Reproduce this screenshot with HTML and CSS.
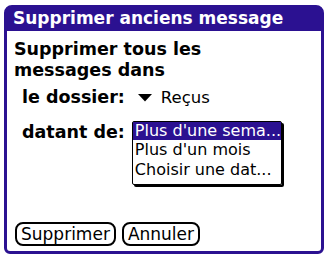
FILE: index.html
```html
<!DOCTYPE html>
<html>
<head>
<meta charset="utf-8">
<link rel="stylesheet" href="styles.css">
</head>
<body>
<div class="dialog">
  <div class="title">Supprimer anciens message</div>
  <div class="content">
    <div class="intro">Supprimer tous les<br>messages dans</div>
    <div class="row folder">
      <span class="label">le dossier:</span>
      <span class="trigger"><svg class="arrow" width="14" height="8" viewBox="0 0 14 8"><path d="M0 0H14L7 7.5Z" fill="#000"/></svg>Reçus</span>
    </div>
    <div class="row dating">
      <span class="label">datant de:</span>
      <ul class="list">
        <li class="sel">Plus d'une sema...</li>
        <li>Plus d'un mois</li>
        <li>Choisir une dat...</li>
      </ul>
    </div>
    <div class="buttons">
      <button class="btn">Supprimer</button>
      <button class="btn">Annuler</button>
    </div>
  </div>
</div>
</body>
</html>
```
FILE: styles.css
```css
html, body {
  margin: 0;
  padding: 0;
  background: #fff;
}
body {
  width: 328px;
  height: 257px;
  overflow: hidden;
  font-family: "DejaVu Sans", sans-serif;
}
.dialog {
  margin: 5px 0 0 4px;
  width: 320px;
  height: 249px;
  box-sizing: border-box;
  border: 3px solid #2b1191;
  border-radius: 8px 8px 6px 6px;
  display: flex;
  flex-direction: column;
}
.title {
  background: #2b1191;
  color: #fff;
  font-weight: bold;
  font-size: 17px;
  height: 23px;
  line-height: 21px;
  padding-left: 6px;
  white-space: nowrap;
  overflow: hidden;
}
.content {
  flex: 1;
  display: flex;
  flex-direction: column;
  padding: 8px 0 0 7px;
}
.intro {
  font-weight: bold;
  font-size: 17.5px;
  line-height: 21px;
}
.row {
  display: flex;
  align-items: flex-start;
}
.label {
  font-weight: bold;
  font-size: 17.5px;
  line-height: 21px;
  padding-left: 8px;
}
.folder {
  margin-top: 6px;
}
.trigger {
  margin-left: 13px;
  font-size: 16.5px;
  line-height: 21px;
  display: flex;
  align-items: center;
}
.arrow {
  margin-right: 9px;
}
.dating {
  margin-top: 14px;
}
.label + .list {
  margin-left: 7px;
}
.list {
  list-style: none;
  margin: -1px 0 0 0;
  padding: 0 0 4px 0;
  width: 148px;
  border: 1px solid #000;
  box-shadow: 2px 2px 0 #000;
  border-radius: 2px;
  font-size: 16px;
}
.list li {
  height: 20px;
  line-height: 19px;
  padding-left: 2px;
  white-space: nowrap;
  overflow: hidden;
}
.list li.sel {
  background: #2b1191;
  color: #fff;
  height: 18px;
  line-height: 17px;
}
.buttons {
  margin-top: auto;
  margin-bottom: 5px;
  display: flex;
  gap: 6px;
  padding-left: 1px;
}
.btn {
  font-family: "DejaVu Sans", sans-serif;
  font-size: 17px;
  background: #fff;
  color: #000;
  border: 2px solid #000;
  border-radius: 8px;
  height: 24px;
  padding: 0 4px;
  line-height: 19px;
}
```
